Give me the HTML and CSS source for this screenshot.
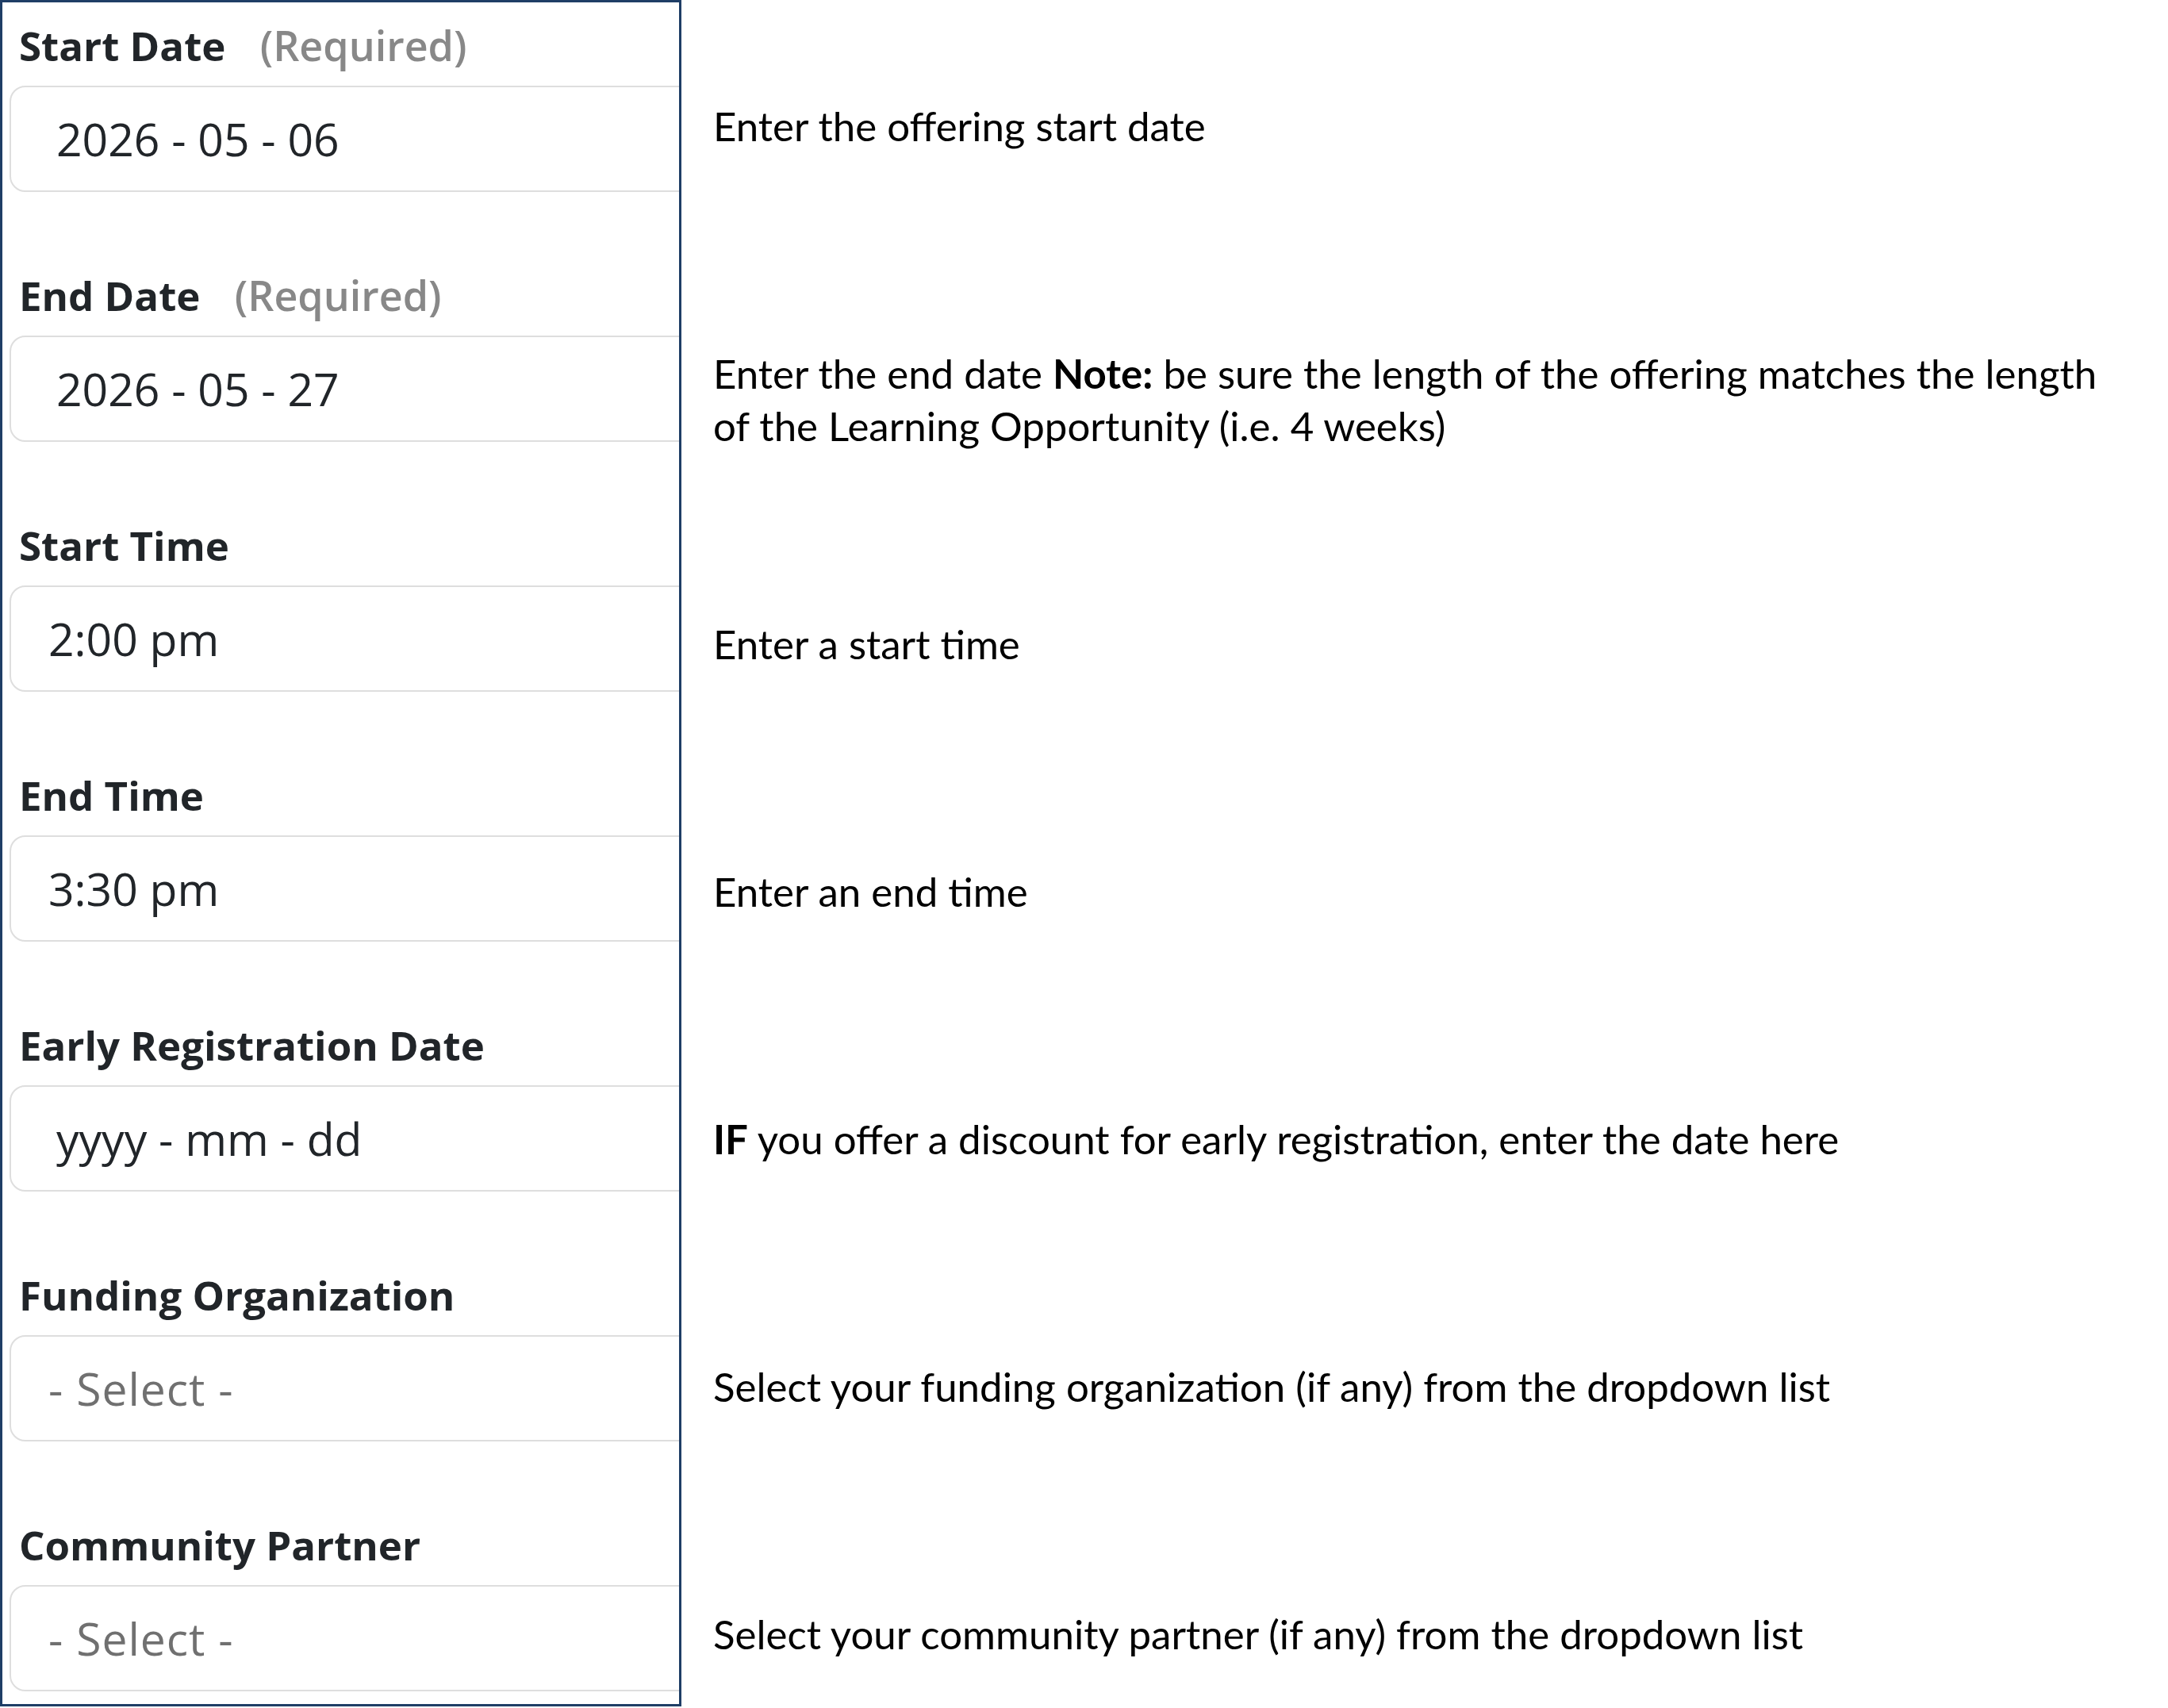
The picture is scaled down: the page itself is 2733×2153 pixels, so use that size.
FILE: index.html
```html
<!DOCTYPE html>
<html lang="en">
<head>
    <meta charset="UTF-8">
    <meta name="viewport" content="width=device-width, initial-scale=1.0">
    <title>Offering Dates</title>
    <link rel="stylesheet" href="styles.css">
</head>
<body>
<main class="guide">
    <form class="offering-form">
        <div class="field">
            <label class="field-label">Start Date <span class="hint">(Required)</span></label>
            <div class="field-input is-date">2026 - 05 - 06</div>
        </div>
        <div class="field">
            <label class="field-label">End Date <span class="hint">(Required)</span></label>
            <div class="field-input is-date">2026 - 05 - 27</div>
        </div>
        <div class="field">
            <label class="field-label">Start Time</label>
            <div class="field-input">2:00 pm</div>
        </div>
        <div class="field">
            <label class="field-label">End Time</label>
            <div class="field-input">3:30 pm</div>
        </div>
        <div class="field">
            <label class="field-label">Early Registration Date</label>
            <div class="field-input is-date">yyyy - mm - dd</div>
        </div>
        <div class="field">
            <label class="field-label">Funding Organization</label>
            <div class="field-input is-select">- Select -</div>
        </div>
        <div class="field">
            <label class="field-label">Community Partner</label>
            <div class="field-input is-select">- Select -</div>
        </div>
    </form>

    <div class="notes">
        <div class="note is-first"><p>Enter the offering start date</p></div>
        <div class="note is-wrap"><p>Enter the end date <strong>Note:</strong> be sure the length of the offering matches the length<br>of the Learning Opportunity (i.e. 4 weeks)</p></div>
        <div class="note"><p>Enter a start time</p></div>
        <div class="note"><p>Enter an end time</p></div>
        <div class="note"><p><strong>IF</strong> you offer a discount for early registration, enter the date here</p></div>
        <div class="note"><p>Select your funding organization (if any) from the dropdown list</p></div>
        <div class="note"><p>Select your community partner (if any) from the dropdown list</p></div>
    </div>
</main>
</body>
</html>
```

FILE: styles.css
```css
*{
    margin: 0;
    padding: 0;
    box-sizing: border-box;
}
body{
    background: #fff;
    font-family: "Open Sans", "Noto Sans", sans-serif;
}
.guide{
    display: flex;
    align-items: flex-start;
}

/* left: the form panel */
.offering-form{
    width: 859px;
    border: 3px solid #1f3e66;
    padding: 24px 0 16px 9px;
    overflow: hidden;
}
.field + .field{
    margin-top: 100px;
}
.field-label{
    display: block;
    padding-left: 12px;
    font-size: 51px;
    line-height: 60px;
    font-weight: 700;
    color: #212529;
}
.field-label .hint{
    margin-left: 30px;
    font-size: 52px;
    font-weight: 600;
    color: #888;
}
.field-input{
    display: flex;
    align-items: center;
    height: 134px;
    margin-top: 21px;
    margin-right: -40px;
    padding-left: 47px;
    border: 2px solid #dedede;
    border-radius: 20px;
    font-size: 57px;
    color: #212529;
}
.field-input.is-date{
    padding-left: 57px;
}
.field-input.is-select{
    color: #707070;
    letter-spacing: 1px;
}

/* right: the help notes, one per field */
.notes{
    flex: 1;
    display: grid;
    grid-auto-rows: 312px;
    padding: 40px 0 0 40px;
}
.note{
    display: flex;
    align-items: center;
    height: 134px;
    margin-top: 81px;
}
.note.is-first{
    margin-top: 52px;
}
.note.is-wrap{
    margin-top: 85px;
}
.note p{
    font-family: Lato, "Open Sans", sans-serif;
    font-size: 51px;
    line-height: 66px;
    color: #000;
}
.note strong{
    font-weight: 700;
}
```
